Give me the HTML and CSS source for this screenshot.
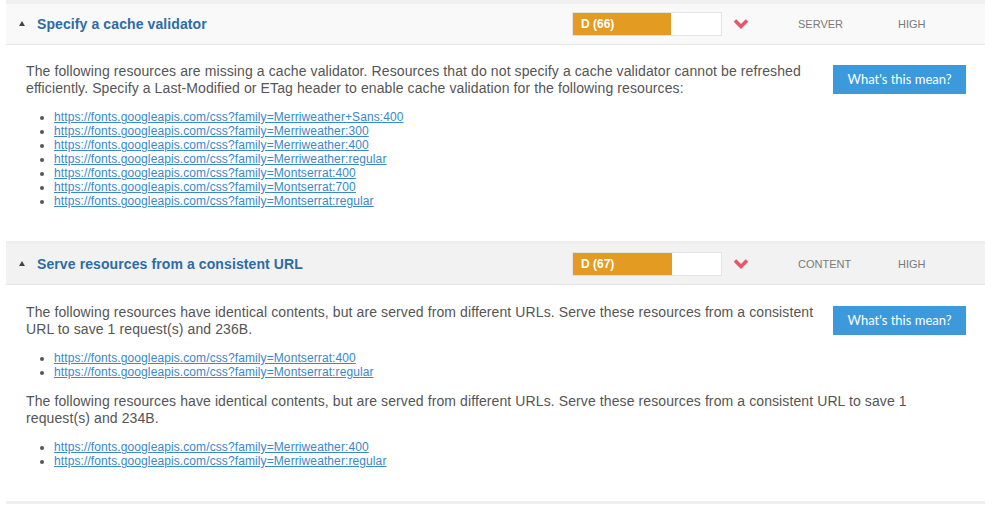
FILE: index.html
```
<!DOCTYPE html>
<html lang="en">

<head>
    <meta charset="UTF-8">
    <title>Recommendations</title>
    <link rel="stylesheet" href="styles.css">
</head>

<body>
    <div class="report">
        <div class="edge"></div>

        <!-- Cache validator -->
        <div class="item">
            <div class="item-head">
                <span class="caret"></span>
                <h3 class="item-title">Specify a cache validator</h3>
                <div class="score"><div class="score-fill" style="width: 66%">D (66)</div></div>
                <svg class="chev" width="16" height="11" viewBox="0 0 16 11"><path d="M2 2.5 L8 8.5 L14 2.5" fill="none" stroke="#e9556b" stroke-width="3.6" stroke-linejoin="miter"/></svg>
                <span class="col-type">SERVER</span>
                <span class="col-prio">HIGH</span>
            </div>
            <div class="item-body">
                <a class="btn" href="#">What's this mean?</a>
                <p>The following resources are missing a cache validator. Resources that do not specify a cache validator cannot be refreshed efficiently. Specify a Last-Modified or ETag header to enable cache validation for the following resources:</p>
                <ul>
                    <li><a href="#">https://fonts.googleapis.com/css?family=Merriweather+Sans:400</a></li>
                    <li><a href="#">https://fonts.googleapis.com/css?family=Merriweather:300</a></li>
                    <li><a href="#">https://fonts.googleapis.com/css?family=Merriweather:400</a></li>
                    <li><a href="#">https://fonts.googleapis.com/css?family=Merriweather:regular</a></li>
                    <li><a href="#">https://fonts.googleapis.com/css?family=Montserrat:400</a></li>
                    <li><a href="#">https://fonts.googleapis.com/css?family=Montserrat:700</a></li>
                    <li><a href="#">https://fonts.googleapis.com/css?family=Montserrat:regular</a></li>
                </ul>
            </div>
        </div>

        <!-- Consistent URL -->
        <div class="item">
            <div class="item-head hover">
                <span class="caret"></span>
                <h3 class="item-title">Serve resources from a consistent URL</h3>
                <div class="score"><div class="score-fill" style="width: 67%">D (67)</div></div>
                <svg class="chev" width="16" height="11" viewBox="0 0 16 11"><path d="M2 2.5 L8 8.5 L14 2.5" fill="none" stroke="#e9556b" stroke-width="3.6" stroke-linejoin="miter"/></svg>
                <span class="col-type">CONTENT</span>
                <span class="col-prio">HIGH</span>
            </div>
            <div class="item-body">
                <a class="btn" href="#">What's this mean?</a>
                <p>The following resources have identical contents, but are served from different URLs. Serve these resources from a consistent URL to save 1 request(s) and 236B.</p>
                <ul>
                    <li><a href="#">https://fonts.googleapis.com/css?family=Montserrat:400</a></li>
                    <li><a href="#">https://fonts.googleapis.com/css?family=Montserrat:regular</a></li>
                </ul>
                <p>The following resources have identical contents, but are served from different URLs. Serve these resources from a consistent URL to save 1 request(s) and 234B.</p>
                <ul>
                    <li><a href="#">https://fonts.googleapis.com/css?family=Merriweather:400</a></li>
                    <li><a href="#">https://fonts.googleapis.com/css?family=Merriweather:regular</a></li>
                </ul>
            </div>
        </div>
    </div>
</body>

</html>
```

FILE: styles.css
```
body {
    margin: 0;
    font-family: 'Liberation Sans', Arial, sans-serif;
    background: #fff;
    color: #555;
}

.report {
    margin: 0 9px 0 6px;
}

.edge {
    height: 4px;
    background: #f0f0f0;
}

.item {
    border-bottom: 3px solid #efefef;
}

.item-head {
    display: flex;
    align-items: center;
    height: 39px;
    padding-bottom: 1px;
    background: #f9f9f9;
    border-bottom: 1px solid #e6e6e6;
}

.item-head.hover {
    background: #f2f2f2;
}

.caret {
    width: 0;
    height: 0;
    margin: 0 12px 0 13px;
    border-left: 3.5px solid transparent;
    border-right: 3.5px solid transparent;
    border-bottom: 5px solid #444;
}

.item-title {
    flex: 1;
    margin: 0;
    font-size: 14px;
    font-weight: bold;
    letter-spacing: 0.1px;
    color: #2d6ca5;
}

.score {
    width: 148px;
    height: 22px;
    margin-right: 1px;
    border: 1px solid #e4e4e4;
    background: #fff;
}

.score-fill {
    height: 22px;
    line-height: 22px;
    background: #e39b21;
    color: #fff;
    font-size: 12px;
    font-weight: bold;
    padding-left: 8px;
    box-sizing: border-box;
}

.chev {
    margin: 0 0 0 10px;
}

.col-type {
    width: 100px;
    margin-left: 49px;
    font-size: 11px;
    color: #7a7a7a;
}

.col-prio {
    width: 87px;
    font-size: 11px;
    color: #7a7a7a;
}

.item-body {
    padding: 18px 19px 33px 20px;
    overflow: hidden;
}

.item + .item .item-body {
    padding-top: 19px;
    padding-bottom: 33px;
}

.item-body p {
    margin: 0;
    font-size: 14px;
    line-height: 17px;
    letter-spacing: 0.1px;
}

.item-body ul {
    margin: 13px 0 14px 0;
    padding-left: 28px;
    font-size: 12px;
    line-height: 14px;
    letter-spacing: 0.1px;
}

.item-body ul:last-child {
    margin-bottom: 0;
}

.item-body li a {
    color: #3a87cc;
}

.btn {
    float: right;
    margin: 2px 0 10px 8px;
    width: 133px;
    height: 29px;
    line-height: 29px;
    text-align: center;
    background: #3b99dc;
    color: #fff;
    font-family: Lato, sans-serif;
    font-size: 13px;
    text-decoration: none;
}
```
